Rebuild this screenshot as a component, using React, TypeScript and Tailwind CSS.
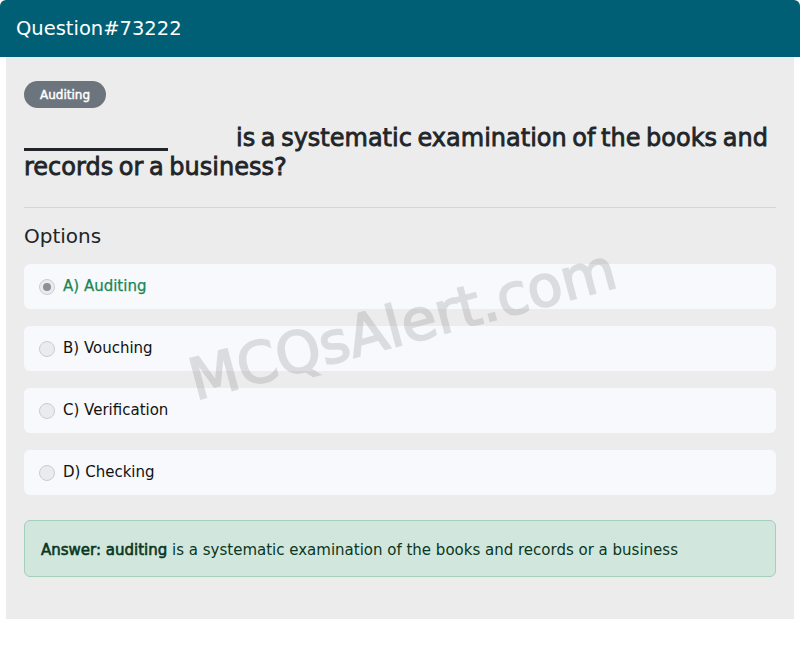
import React from "react"

const options = [
  { label: "A) Auditing", correct: true },
  { label: "B) Vouching", correct: false },
  { label: "C) Verification", correct: false },
  { label: "D) Checking", correct: false },
]

function Radio({ checked }: { checked: boolean }) {
  return (
    <span className="flex h-4 w-4 shrink-0 items-center justify-center rounded-full border border-[#c9cdd1] bg-[#e9ecef]">
      {checked && <span className="h-2 w-2 rounded-full bg-[#8d9196]" />}
    </span>
  )
}

export default function App() {
  return (
    <div className="min-h-[650px] w-[800px] bg-white font-['DejaVu_Sans',sans-serif] text-[#212529]">
      {/* Header */}
      <div className="flex h-[57px] items-center rounded-t-md bg-[#005f74] px-4">
        <h1 className="text-[19.5px] font-normal text-white">Question#73222</h1>
      </div>

      {/* Body */}
      <div className="relative mx-[6px] bg-[#ececec] px-[18px] pb-[42px] pt-6">
        <span className="inline-flex h-[27px] items-center rounded-full bg-[#6c757d] px-4 text-[12px] font-normal text-white [-webkit-text-stroke:0.45px_white]">
          Auditing
        </span>

        <h2 className="mt-4 text-[24px] font-normal leading-[29px] [word-spacing:-2px] [-webkit-text-stroke:0.8px_#212529]">
          {/* blank to fill in */}
          <span className="-mb-[5px] mr-[68px] inline-block h-0 w-[144px] border-b-[3px] border-[#212529]" />
          is a systematic examination of the books and records or a business?
        </h2>

        <hr className="mt-[25px] border-t border-[#d6d6d6]" />

        <h3 className="mt-4 text-[20px] leading-6">Options</h3>

        <div className="mt-4 flex flex-col gap-[17px]">
          {options.map((o) => (
            <div
              key={o.label}
              className="flex h-[45px] items-center gap-2 rounded-md bg-[#f8f9fc] px-[15px]"
            >
              <Radio checked={o.correct} />
              <span
                className={`text-[15px] ${
                  o.correct ? "text-[#198754] [-webkit-text-stroke:0.25px_#198754]" : "text-[#111]"
                }`}
              >
                {o.label}
              </span>
            </div>
          ))}
        </div>

        <div className="mt-[25px] flex h-[57px] items-center rounded-md border border-[#a3cfbb] bg-[#d1e7dd] px-4 text-[15px] text-[#0a3622]">
          <span className="pt-[3px]">
            <b className="font-normal [-webkit-text-stroke:0.6px_#0a3622]">Answer: auditing</b> is a systematic examination of the books and records or a business
          </span>
        </div>

        {/* Watermark */}
        <div className="pointer-events-none absolute left-[177px] top-[239px] -rotate-[15deg] select-none text-[57px] leading-none text-[#6e6e6e] opacity-20 [-webkit-text-stroke:1.8px_#6e6e6e]">
          MCQsAlert.com
        </div>
      </div>
    </div>
  )
}
